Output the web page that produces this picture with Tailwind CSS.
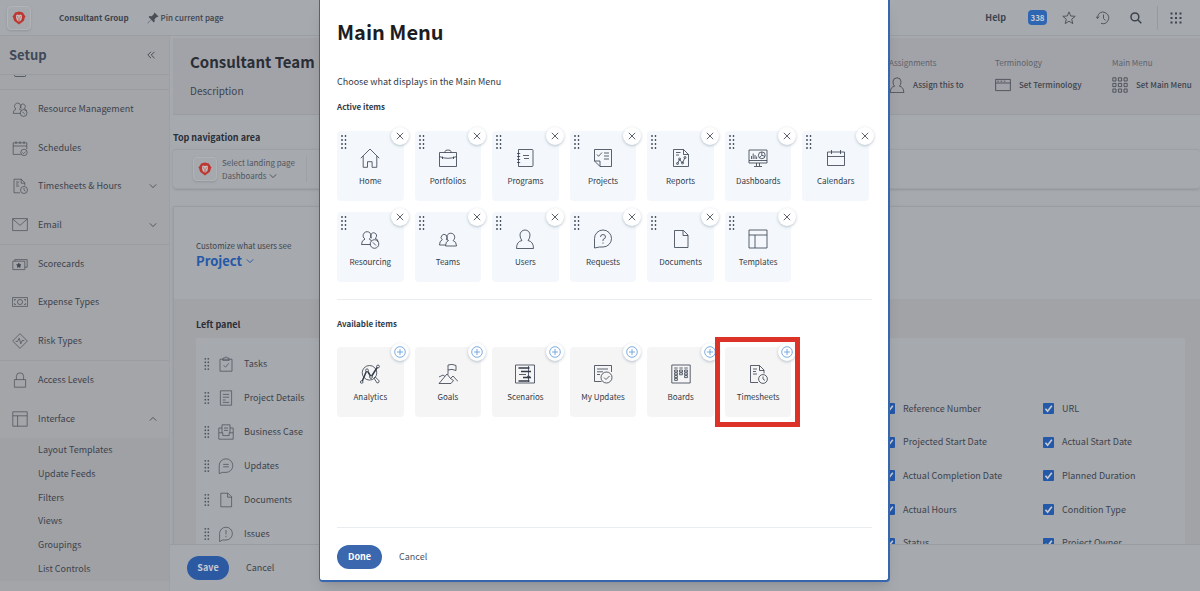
<!DOCTYPE html>
<html lang="en">
<head>
<meta charset="utf-8">
<meta name="viewport" content="width=device-width, initial-scale=1">
<title>Layout Template - Main Menu</title>
<script src="https://cdn.jsdelivr.net/npm/@tailwindcss/browser@4"></script>
</head>
<body class="h-screen overflow-hidden bg-[#a6a9ae] font-['Noto_Sans_CJK_SC',sans-serif] text-[9px] leading-4 text-[#3d434d]">
<svg class="hidden" aria-hidden="true">
  <symbol id="lion" viewBox="0 0 14 14"><path d="M3.2 1.4 7 .6l3.8.8 2.400 3.800-1.300 4.600L7 13.600 2.100 9.800.8 5.200z" fill="#bd3630"/><path d="M4.200 4 5.500 3.400 7 4l1.500-.6 1.300.6.200 2.400-.8 2.800L7 10.800 4.800 9.200 4 6.400z" fill="#c3b9ba"/><path d="M5 5.600l1.300.8M9 5.600l-1.300.8M7 7v1.600M6.200 9l.8.6.8-.6" stroke="#bd3630" stroke-width=".7"/></symbol>
  <symbol id="home" viewBox="0 0 20 20"><path d="M.8 10.200 10 1l9.200 9.200M3.200 8v11.300h4.300v-5.600h4.600v5.600h4.700V8"/></symbol>
  <symbol id="briefcase" viewBox="0 0 20 20"><path d="M1.500 4.500h17v14h-17zM7 4.500V3.600Q7 2 10 2t3 1.600v.9M1.500 8.600q8.500 3.400 17 0M4.500 8.500v2.500M15.500 8.500v2.500"/></symbol>
  <symbol id="notebook" viewBox="0 0 20 20"><path d="M3.500 1.500h13.500q1 0 1 1v15q0 1-1 1h-13.500zM2 5.500h3.200M2 8.500h3.200M2 11.500h3.200M2 14.500h3.200M8 7.500h6M9 10.500h5"/></symbol>
  <symbol id="projects" viewBox="0 0 20 20"><path d="M1.500 1.500h17v17H7l-5.500-5.500zM1.500 13H7v5.500M4 6.500l1.500 1.800L9 4.500M11 5h5M11 8h5M11 11h5"/></symbol>
  <symbol id="report" viewBox="0 0 20 20"><path d="M2.500 1.500h10l5 5v12h-15zM12.500 1.500v5h5M5 4.500h4.500M5 7h3"/><path d="M6.500 15.500l2-4 3 3.500 2.500-5.500"/><circle cx="6.500" cy="15.500" r="1"/><circle cx="8.600" cy="11" r="1"/><circle cx="11.500" cy="15" r="1"/><circle cx="14" cy="9.500" r="1"/></symbol>
  <symbol id="dashboard" viewBox="0 0 20 20"><path d="M1 2h18v13H1zM1 12.500h18M8.500 15v3M11.500 15v3M6 18.500h8M3.500 11V8M5.200 11V5.500M7 11V7M8.600 11V8.500"/><circle cx="13.800" cy="7.300" r="3.400"/><path d="M13.800 7.300V4M13.800 7.300l3 1M13.800 7.300 11.500 9.600"/></symbol>
  <symbol id="calendar" viewBox="0 0 20 20"><path d="M1.500 4h17v13.500h-17zM1.500 8.500h17M5.500 2v4M14.500 2v4"/></symbol>
  <symbol id="resourcing" viewBox="0 0 20 20"><path d="M10.500 15.500h-9q0-4.300 3.500-5.400a4 4 0 1 1 4.200 0q1.800.6 2.300 1.900M12 9.300a3 3 0 1 1 3.200 0q2.800.8 2.800 3.500"/><circle cx="14.500" cy="15" r="4.300"/><path d="M12.800 13.300 14.500 15l1.500 1.500"/></symbol>
  <symbol id="teams" viewBox="0 0 20 20"><path d="M7.500 17q0-4.500 3-5.500a4 4 0 1 1 4.500 0q3.500 1 3.500 5.500zM7.500 16h-6q0-4.300 2.800-5.200a3 3 0 1 1 4-.3q1 .3 1.500 1"/></symbol>
  <symbol id="user" viewBox="0 0 20 20"><path d="M1.500 19.500q0-7 5.500-8Q5 9.500 5 6a5 5 0 0 1 10 0q0 3.500-2 5.500 5.500 1 5.500 8z"/></symbol>
  <symbol id="request" viewBox="0 0 20 20"><path d="M1.500 19V9.500a8.500 8.500 0 1 1 8.500 8.500H6.500zM7.500 8Q7.500 5.500 10 5.500T12.500 8Q12.500 9.500 10 10.500V12M10 13.500v1.200"/></symbol>
  <symbol id="document" viewBox="0 0 20 20"><path d="M3.500 1.500h9l4.500 4.500v12.500h-13.500zM12 1.500v5h5"/></symbol>
  <symbol id="template" viewBox="0 0 20 20"><path d="M1 1h18v18H1zM1 6h18M7 6v13"/></symbol>
  <symbol id="analytics" viewBox="0 0 20 20"><circle cx="9.500" cy="8.800" r="7.300"/><path d="M14 14.200l1.300-1.200 4 4q-.5 2.200-2.200 2z"/><path d="M2.300 17 6.300 7.500M7.800 7.500l2.700 4.500M11.700 12 17.200 3.500" stroke-width="1.500"/><circle cx="1.700" cy="18" r="1.300"/><circle cx="7" cy="6.300" r="1.400"/><circle cx="11" cy="13" r="1.400"/><circle cx="18" cy="2.500" r="1.400"/></symbol>
  <symbol id="goals" viewBox="0 0 20 20"><path d="M1 19.500 9 10l3.500 4.500 2.500-2.500 5 5.500M1 13l4-2 2 1.500M1 19.500h12l2.500-3-3-2M10 10.500V1q4-1.500 8 .5v5q-4-2-8-.5"/></symbol>
  <symbol id="scenario" viewBox="0 0 20 20"><path d="M.5 1h19v18H.5z"/><path d="M3.500 4h11M6 7.500h10M8 13.500h8M3.500 17h11" stroke-width="1.300"/><path d="M4 10.500h7M13.500 2v16"/><circle cx="13.500" cy="13" r="1.200"/></symbol>
  <symbol id="updates" viewBox="0 0 20 20"><path d="M8.500 17.500h-7V1.500h17V8M4 5h11M4 7.800h6M4 10.500h3"/><circle cx="13.500" cy="13.500" r="5.500"/><path d="M11 13.500l2 2 3.500-3.500"/></symbol>
  <symbol id="boards" viewBox="0 0 20 20"><path d="M.8 1h18.400v18H.8zM3.200 4h3.500M8.300 4h3.500M13.300 4h3.500"/><g stroke-width=".8"><path d="M3.600 6h2.800v2H3.600zM3.600 8.800h2.800v2H3.600zM3.600 11.600h2.800v2H3.600zM3.600 14.400h2.800v2H3.600zM8.600 6h2.800v2H8.600zM8.600 8.800h2.800v2H8.600zM13.600 6h2.800v2h-2.800zM13.600 8.800h2.800v2h-2.800zM13.600 11.600h2.800v2h-2.800z"/></g></symbol>
  <symbol id="timesheet" viewBox="0 0 20 20"><path d="M10 18.500H2.500v-17h9l4.500 4.500v3.500M11.500 1.500v5H16M5 5h4M5 7.500h3M5 10h4"/><circle cx="15" cy="15" r="4.400"/><path d="M15 12.500V15l2 1.500"/></symbol>
  <symbol id="schedule" viewBox="0 0 20 20"><path d="M11 18H1.500V3.500h17v8M1.500 7.500h17M5 1.500v3.500M10 1.500v3.500M15 1.500v3.500"/><circle cx="15" cy="15.500" r="4"/><path d="M13 15.500l1.500 1.500 2.500-2.500"/></symbol>
  <symbol id="mail" viewBox="0 0 20 20"><path d="M.8 2h18.400v15H.8zM1 2.500l9 8 9-8"/></symbol>
  <symbol id="scorecard" viewBox="0 0 20 20"><path d="M1 6.500h15v10.500H1zM3.500 6.500V4.500h15.500v9.500h-3"/><path d="m8.500 8.800.8 1.900 2 .2-1.500 1.400.4 2-1.700-1-1.700 1 .4-2-1.500-1.400 2-.2z" fill="currentColor"/></symbol>
  <symbol id="money" viewBox="0 0 20 20"><path d="M.5 4.500h19v11H.5zM3 7h2M3 13h2M15 7h2M15 13h2M3 7v1.500M17 7v1.500M3 13v-1.500M17 13v-1.500"/><circle cx="10" cy="10" r="3.200"/></symbol>
  <symbol id="risk" viewBox="0 0 20 20"><path d="M10 .8 19.200 10 10 19.200.8 10zM4.500 10.500h2.500L9 6.500l2 7 1.500-4h3"/></symbol>
  <symbol id="lock" viewBox="0 0 20 20"><path d="M3 9.500h14v9.500H3zM5.500 9.500V5.500a4.500 4.500 0 0 1 9 0v4"/></symbol>
  <symbol id="task" viewBox="0 0 20 20"><path d="M2.500 4h15v15h-15zM6 4q0-2 2.500-2 1.500-2 3 0Q14 2 14 4v1.500H6zM7 11.500l2.500 2.500L13.500 9"/></symbol>
  <symbol id="details" viewBox="0 0 20 20"><path d="M3 1h14v18H3zM6 5.500h8M6 9h8M6 12.500h3.500M6 15.500h8"/></symbol>
  <symbol id="case" viewBox="0 0 20 20"><path d="M5 11V1h10v10M5 5H1v14h18V5h-4M1 11h5v3.500h8V11h5M7.500 5h5M7.500 8h5"/></symbol>
  <symbol id="comment" viewBox="0 0 20 20"><path d="M1.500 19.500V9.500a8.500 8.500 0 1 1 8.500 8.500H5.500zM6.500 8h7M6.500 11h7"/></symbol>
  <symbol id="issue" viewBox="0 0 20 20"><path d="M2 19.500V9.500a8 8 0 1 1 8 8H5.500zM10 5v5.500M10 12.300v1.700" /></symbol>
  <symbol id="window" viewBox="0 0 20 20"><path d="M.8 3h18.400v14H.8zM.8 7.500h18.400M3 5.200h2M7 5.200h2M11 5.200h2"/></symbol>
  <symbol id="grid9" viewBox="0 0 20 20"><path d="M1 1h4v4H1zM8 1h4v4H8zM15 1h4v4h-4zM1 8h4v4H1zM8 8h4v4H8zM15 8h4v4h-4zM1 15h4v4H1zM8 15h4v4H8zM15 15h4v4h-4z"/></symbol>
  <symbol id="chev" viewBox="0 0 8 8"><path d="M.8 2.400 4 5.600l3.200-3.200"/></symbol>
  <symbol id="x" viewBox="0 0 8 8"><path d="M.8.8l6.400 6.400M7.200.8.8 7.200"/></symbol>
  <symbol id="plus" viewBox="0 0 12 12"><circle cx="6" cy="6" r="5.300"/><path d="M6 3v6M3 6h6"/></symbol>
  <symbol id="grip" viewBox="0 0 6 14"><path d="M.5.5h1v1h-1zM4 .5h1v1H4zM.5 4.500h1v1h-1zM4 4.500h1v1H4zM.5 8.500h1v1h-1zM4 8.500h1v1H4zM.5 12.500h1v1h-1zM4 12.500h1v1H4z" fill="currentColor" stroke="currentColor" stroke-width=".6"/></symbol>
</svg>

<div class="flex h-full flex-col">
  <header class="flex h-9 shrink-0 items-center border-b border-[#9b9ea3] pr-[18px] pl-[7px] text-[8px] font-bold">
    <a href="#" aria-label="Home" class="grid h-6 w-6 place-items-center rounded border border-[#b2b4b7] shadow-sm"><svg class="h-[14px] w-[14px]" fill="none"><use href="#lion"/></svg></a>
    <a href="#" class="ml-7">Consultant Group</a>
    <button class="ml-[18px] flex items-center gap-[2px] font-medium">
      <svg class="h-3 w-3" viewBox="0 0 12 12" fill="#4a4e55"><path d="M7.500.5l4 4-1.200.6-.5-.1-2.300 2.300.2 2.200-.9.900-2.600-2.600L.8 11.600l-.4-.4L4.100 7.500 1.600 5l.9-.9 2.200.2L7 2l-.1-.5z"/></svg>
      Pin current page</button>
    <div class="ml-auto flex items-center">
      <a href="#" class="mr-[22px] text-[9px]">Help</a>
      <button class="mr-[15px] grid h-[15px] w-[19px] place-items-center rounded-sm bg-[#2f66b4] text-[8px] font-bold text-[#c5cad2]">338</button>
      <button aria-label="Favorites" class="mr-5"><svg class="h-[14px] w-[14px]" viewBox="0 0 14 14" fill="none" stroke="#4a4e55" stroke-width=".9"><path d="m7 .9 1.700 4.100 4.500.3-3.500 2.900 1.100 4.400L7 10.200l-3.800 2.400 1.100-4.400L.8 5.300 5.300 5z"/></svg></button>
      <button aria-label="Recent" class="mr-5"><svg class="h-[14px] w-[14px]" viewBox="0 0 14 14" fill="none" stroke="#4a4e55" stroke-width=".9"><path d="M2.600 3.200A5.700 5.700 0 1 1 5 12.300M1.500 7.500 3 5.500M1.500 7.500 0 5.500M1.600 7.300Q1.500 5 2.600 3.200M7.500 3.500V7.500l2 2"/></svg></button>
      <button aria-label="Search" class="mr-[15px]"><svg class="h-3 w-3" viewBox="0 0 12 12" fill="none" stroke="#3d434d" stroke-width="1.500"><circle cx="4.900" cy="4.900" r="3.900"/><path d="m7.800 7.800 3.500 3.500"/></svg></button>
      <span class="mr-3 h-6 w-px bg-[#96999e]"></span>
      <button aria-label="Apps"><svg class="h-3 w-3" viewBox="0 0 12 12" fill="#3d434d"><path d="M.5.5h2v2h-2zM5 .5h2v2H5zM9.500.5h2v2h-2zM.5 5h2v2h-2zM5 5h2v2H5zM9.500 5h2v2h-2zM.5 9.500h2v2h-2zM5 9.500h2v2H5zM9.500 9.500h2v2h-2z"/></svg></button>
    </div>
  </header>

  <div class="flex min-h-0 flex-1">
    <nav class="flex w-[170px] shrink-0 flex-col border-r border-[#9da0a5] bg-[#a4a5a9]" aria-label="Setup">
      <div class="flex h-[39px] shrink-0 items-center justify-between border-b border-[#999ca1] pr-[14px] pl-[9px]">
        <h2 class="text-[13px] font-bold text-[#3f4959]">Setup</h2>
        <button aria-label="Collapse"><svg class="h-2 w-2" viewBox="0 0 8 8" fill="none" stroke="#3d434d" stroke-width=".9"><path d="M4 .8.8 4 4 7.200M7.500.8 4.300 4l3.200 3.200"/></svg></button>
      </div>
      <div class="h-[15px] shrink-0 border-b border-[#999ca1] pl-[14px]"><div class="h-[2px] w-3 rounded-b border-x border-b border-[#565c66]"></div></div>
      <div id="side" class="flex flex-col"></div>
      <div id="subs" class="flex h-[143px] shrink-0 flex-col bg-[#a0a1a5] pl-[38px]"></div>
    </nav>

    <div class="flex min-w-0 flex-1 flex-col">
      <main class="flex min-h-0 flex-1 flex-col overflow-hidden pt-[2px] pl-[3px]">
        <section class="flex h-[77px] shrink-0 justify-between border-b border-[#999ca1] bg-[#a2a3a8] pr-[9px] pl-[17px]">
          <div>
            <h1 class="mt-3 text-[15px] leading-6 font-bold text-[#2a2e36]">Consultant Team Layout</h1>
            <p class="mt-[9px] text-[10px] leading-4">Description</p>
          </div>
          <div class="grid grid-cols-[106px_117px_79px] pt-[17px] text-[8px] whitespace-nowrap">
            <div><p class="text-[#5c626c]">Assignments</p><button class="mt-[6px] flex items-center gap-2 font-medium"><svg class="h-4 w-4" fill="none" stroke="currentColor"><use href="#user"/></svg>Assign this to</button></div>
            <div><p class="text-[#5c626c]">Terminology</p><button class="mt-[6px] flex items-center gap-2 font-medium"><svg class="h-4 w-4" fill="none" stroke="currentColor"><use href="#window"/></svg>Set Terminology</button></div>
            <div><p class="text-[#5c626c]">Main Menu</p><button class="mt-[6px] flex items-center gap-2 font-medium"><svg class="h-4 w-4" fill="none" stroke="currentColor"><use href="#grid9"/></svg>Set Main Menu</button></div>
          </div>
        </section>
        <h3 class="mt-[15px] text-[9px] leading-4 font-bold text-[#2a2e36]">Top navigation area</h3>
        <section class="mt-[3px] flex h-10 shrink-0 items-center rounded-sm border-y border-[#9da0a5] pl-5 text-[8px] leading-[13px] shadow-sm">
          <span class="grid h-6 w-6 place-items-center rounded border border-[#b0b2b5] shadow-sm"><svg class="h-[14px] w-[14px]" fill="none"><use href="#lion"/></svg></span>
          <div class="ml-[5px] w-[85px] border-r border-[#9da0a5] text-[#50555f]"><p>Select landing page</p><button class="flex items-center gap-[2px]">Dashboards <svg class="h-2 w-2" fill="none" stroke="currentColor"><use href="#chev"/></svg></button></div>
        </section>
        <section class="mt-[17px] flex min-h-0 flex-1 flex-col border-l border-[#9a9da2] bg-[#a2a3a7] shadow-sm">
          <div class="h-[93px] shrink-0 border-t border-[#999ca1] bg-[#a6a9ae] pt-8 pl-[22px]">
            <p class="text-[8px] leading-[14px]">Customize what users see</p>
            <button class="flex items-center gap-1 text-[13px] leading-4 font-bold text-[#2458a8]">Project <svg class="h-2 w-2" fill="none" stroke="currentColor"><use href="#chev"/></svg></button>
          </div>
          <h3 class="mt-[18px] pl-[22px] text-[9px] leading-4 font-bold text-[#2a2e36]">Left panel</h3>
          <div class="mt-[5px] mr-[15px] ml-[22px] flex min-h-0 flex-1 justify-between bg-[#a6a9ae]">
            <ul id="panel" class="pt-[9px] pl-2"></ul>
            <div id="fields" class="mt-[54px] grid h-[168px] w-[301px] grid-flow-col grid-cols-[159px_1fr] grid-rows-5"></div>
          </div>
        </section>
      </main>
      <footer class="z-10 flex h-[47px] shrink-0 items-center gap-[17px] border-t border-[#999ca1] bg-[#a6a9ae] pl-[17px]">
        <button class="h-6 w-[42px] rounded-full bg-[#2b59a2] font-bold text-[#c5cad2]">Save</button>
        <button>Cancel</button>
      </footer>
    </div>
  </div>
</div>

<div role="dialog" aria-labelledby="dlg" class="absolute top-0 left-1/2 z-20 ml-[-281px] flex h-[582px] w-[571px] flex-col rounded-b-sm border-x border-b-2 border-r-2 border-[#3566ae] bg-white pr-4 pl-[17px] text-[#323b4a] shadow-lg">
  <h2 id="dlg" class="mt-[18px] text-[20px] leading-7 font-bold text-[#1b1d22]">Main Menu</h2>
  <p class="mt-7 leading-4">Choose what displays in the Main Menu</p>
  <h3 class="mt-[9px] text-[8px] leading-4 font-bold">Active items</h3>
  <div id="active" class="mt-4 mr-[3px] grid grid-cols-7 gap-[11px]"></div>
  <hr class="mt-[17px] border-[#e9edf0]">
  <h3 class="mt-4 text-[8px] leading-4 font-bold">Available items</h3>
  <div id="available" class="mt-[15px] mr-[3px] grid grid-cols-7 gap-[11px]"></div>
  <div class="mt-auto flex h-[53px] items-start gap-[17px] border-t border-[#e9edf0] pt-[17px]">
    <button class="h-6 w-[45px] rounded-full bg-[#3a67ad] font-bold text-white">Done</button>
    <button class="h-6 text-[#50555f]">Cancel</button>
  </div>
</div>

<script>
const icon = (id, cls) => `<svg class="${cls}" fill="none" stroke="currentColor" stroke-width=".8"><use href="#${id}"/></svg>`;
const put = (id, html) => document.getElementById(id).innerHTML = html;

const groups = [
  ['h-[155px] border-b', [['resourcing','Resource Management'],['schedule','Schedules'],['timesheet','Timesheets & Hours','v'],['mail','Email','v']]],
  ['h-[116px] border-b', [['scorecard','Scorecards'],['money','Expense Types'],['risk','Risk Types']]],
  ['h-[77px]', [['lock','Access Levels'],['template','Interface','^']]]
];
put('side', groups.map(([cls, rows]) => `<div class="flex shrink-0 flex-col border-[#999ca1] ${cls}">` + rows.map(([i, t, c]) =>
  `<a href="#" class="flex flex-1 items-center pr-3 pl-3">${icon(i, 'h-4 w-4')}<span class="ml-[10px] flex-1">${t}</span>${c ? icon('chev', c === '^' ? 'h-2 w-2 rotate-180' : 'h-2 w-2') : ''}</a>`).join('') + '</div>').join(''));
put('subs', ['Layout Templates','Update Feeds','Filters','Views','Groupings','List Controls'].map(t => `<a href="#" class="flex flex-1 items-center">${t}</a>`).join(''));
put('panel', [['task','Tasks'],['details','Project Details'],['case','Business Case'],['comment','Updates'],['document','Documents'],['issue','Issues']].map(([i, t]) =>
  `<li class="flex h-[34px] items-center">${icon('grip', 'h-3 w-[6px]')}${icon(i, 'ml-2 h-4 w-4')}<span class="ml-[10px]">${t}</span></li>`).join(''));
put('fields', ['Reference Number','Projected Start Date','Actual Completion Date','Actual Hours','Status','URL','Actual Start Date','Planned Duration','Condition Type','Project Owner'].map(t =>
  `<label class="flex items-center gap-2"><span class="relative flex h-[11px] w-[11px]"><input type="checkbox" checked class="h-[11px] w-[11px] appearance-none rounded-[1px] bg-[#2458a8]"><svg class="absolute inset-0 h-[11px] w-[11px]" viewBox="0 0 10 10" fill="none" stroke="#c5cad2" stroke-width="1.500"><path d="M2.200 5.200 4.200 7.400 8 2.600"/></svg></span>${t}</label>`).join(''));

const tile = (i, t, active) => `<div class="relative flex h-[70px] flex-col items-center rounded-sm pt-[17px] text-[8px] leading-4 ${active ? 'bg-[#f4f8fc]' : 'bg-[#f5f5f5]'}">
  ${active ? `<span class="absolute top-1 left-1">${icon('grip', 'h-[14px] w-[6px]')}</span>` : ''}
  <button aria-label="${active ? 'Remove' : 'Add'} ${t}" class="absolute -top-1 -right-[5px] grid h-[18px] w-[18px] place-items-center rounded-full bg-white shadow-[0_1px_3px_rgba(60,90,120,0.35)] ${active ? '' : 'text-[#5b97db]'}">${active ? icon('x', 'h-2 w-2') : icon('plus', 'h-3 w-3')}</button>
  ${icon(i, 'h-5 w-5')}<span class="mt-[5px]">${t}</span>
  ${t === 'Timesheets' ? '<span class="pointer-events-none absolute -inset-y-[10px] -right-[9px] -left-[10px] border-[5px] border-[#dc3227]"></span>' : ''}</div>`;
put('active', [['home','Home'],['briefcase','Portfolios'],['notebook','Programs'],['projects','Projects'],['report','Reports'],['dashboard','Dashboards'],['calendar','Calendars'],['resourcing','Resourcing'],['teams','Teams'],['user','Users'],['request','Requests'],['document','Documents'],['template','Templates']].map(([i, t]) => tile(i, t, true)).join(''));
put('available', [['analytics','Analytics'],['goals','Goals'],['scenario','Scenarios'],['updates','My Updates'],['boards','Boards'],['timesheet','Timesheets']].map(([i, t]) => tile(i, t, false)).join(''));
</script>
</body>
</html>
